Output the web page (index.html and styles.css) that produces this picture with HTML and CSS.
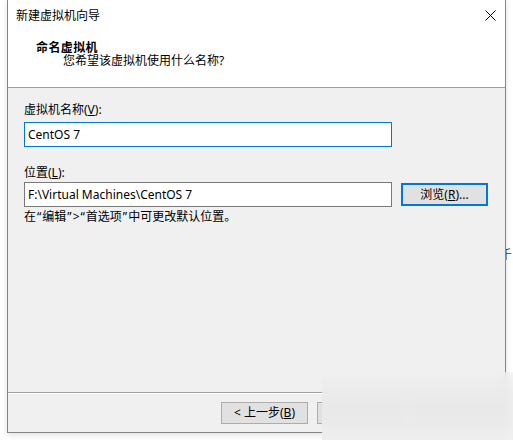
FILE: index.html
```html
<!DOCTYPE html>
<html lang="zh-CN">
<head>
<meta charset="utf-8">
<title>新建虚拟机向导</title>
<link rel="stylesheet" href="styles.css">
</head>
<body>
<div class="desktop">
  <span class="behind-char">千</span>
  <div class="window">
    <div class="top">
      <div class="titlebar">
        <span class="title">新建虚拟机向导</span>
        <svg class="close" width="11" height="11" viewBox="0 0 11 11" aria-hidden="true">
          <path d="M0.5 0.5 L10.5 10.5 M10.5 0.5 L0.5 10.5" stroke="#000" stroke-width="1" fill="none"/>
        </svg>
      </div>
      <div class="header">
        <div class="heading">命名虚拟机</div>
        <div class="subheading">您希望该虚拟机使用什么名称?</div>
      </div>
    </div>
    <div class="content">
      <label class="label first">虚拟机名称(<u>V</u>):</label>
      <div class="input focused">CentOS 7</div>
      <label class="label second">位置(<u>L</u>):</label>
      <div class="row">
        <div class="input">F:\Virtual Machines\CentOS 7</div>
        <button class="btn default">浏览(<u>R</u>)...</button>
      </div>
      <p class="note">在<span class="q">“</span>编辑<span class="q">”</span>&gt;<span class="q">“</span>首选项<span class="q">”</span>中可更改默认位置。</p>
    </div>
    <div class="footer">
      <button class="btn">&lt; 上一步(<u>B</u>)</button>
      <button class="btn"></button>
      <button class="btn"></button>
    </div>
  </div>
  <div class="veil"></div>
</div>
</body>
</html>
```
FILE: styles.css
```css
html, body {
  margin: 0;
  padding: 0;
  background: #ffffff;
}
body {
  width: 513px;
  height: 440px;
  overflow: hidden;
  font-family: "Noto Sans", "Noto Sans CJK SC", sans-serif;
  font-size: 12px;
  color: #000;
}
.desktop {
  position: relative;
  width: 513px;
  height: 440px;
}
.behind-char {
  position: absolute;
  left: 500px;
  top: 246px;
  font-size: 12px;
  line-height: 16px;
  color: #444;
  font-family: "Noto Sans CJK SC", sans-serif;
}
.window {
  position: relative;
  margin-left: 7px;
  width: 497px;
  height: 432px;
  border: 1px solid #858585;
  border-top: none;
  background: #f0f0f0;
  box-shadow: 0 2px 6px rgba(0, 0, 0, 0.12);
  display: flex;
  flex-direction: column;
}
.top {
  background: #ffffff;
  height: 87px;
  border-bottom: 1px solid #a0a0a0;
  flex: none;
}
.titlebar {
  height: 30px;
  display: flex;
  align-items: center;
  padding-left: 8px;
  padding-right: 9px;
}
.title {
  line-height: 16px;
  font-family: "Noto Sans CJK SC", sans-serif;
}
.close {
  margin-left: auto;
  display: block;
}
.header {
  padding-left: 28px;
  padding-top: 10px;
}
.heading {
  font-weight: bold;
  line-height: 14px;
  font-family: "Noto Sans CJK SC", sans-serif;
  letter-spacing: 0.4px;
}
.subheading {
  line-height: 14px;
  padding-left: 27px;
}
.content {
  height: 304px;
  padding-left: 16px;
  flex: none;
  display: flex;
  flex-direction: column;
  align-items: flex-start;
  border-bottom: 1px solid #a0a0a0;
  box-shadow: 0 1px 0 #ffffff;
}
.label {
  display: block;
  line-height: 16px;
}
.label.first {
  margin-top: 14px;
}
.label.second {
  margin-top: 18px;
}
.input {
  box-sizing: border-box;
  width: 368px;
  height: 25px;
  margin-top: 4px;
  border: 1px solid #7a7a7a;
  background: #ffffff;
  padding-left: 3px;
  line-height: 23px;
  white-space: nowrap;
}
.input.focused {
  border-color: #0078d7;
}
.row {
  display: flex;
  align-items: center;
  gap: 9px;
  margin-top: 1px;
}
.row .input {
  margin-top: 0;
}
.btn {
  box-sizing: border-box;
  width: 87px;
  height: 22px;
  border: 1px solid #adadad;
  background: #e1e1e1;
  font-family: "Noto Sans", "Noto Sans CJK SC", sans-serif;
  font-size: 12px;
  color: #000;
  padding: 0;
  line-height: 20px;
  margin: 0;
}
.btn.default {
  height: 23px;
  border: 2px solid #0078d7;
  line-height: 19px;
}
.note {
  margin: 2px 0 0 0;
  line-height: 16px;
}
.note .q {
  padding: 0 1px;
}
.footer {
  flex: 1;
  display: flex;
  align-items: flex-start;
  padding-top: 9px;
  padding-left: 213px;
  gap: 9px;
}
.veil {
  position: absolute;
  left: 322px;
  top: 372px;
  width: 191px;
  height: 68px;
  background: linear-gradient(180deg, rgba(240,240,240,0.5) 0%, rgba(236,236,236,0.8) 20%, rgba(234,234,234,0.85) 60%, rgba(238,238,238,0.9) 100%);
  -webkit-backdrop-filter: blur(5px);
  backdrop-filter: blur(5px);
}
```
